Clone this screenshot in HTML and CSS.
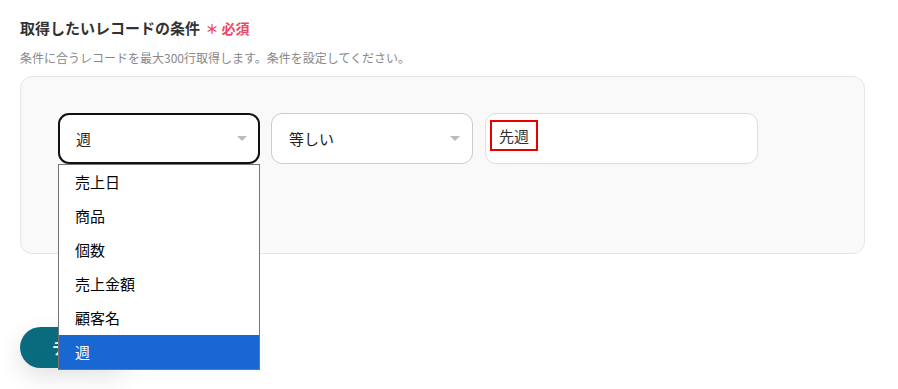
FILE: index.html
```html
<!DOCTYPE html>
<html lang="ja">
<head>
    <meta charset="UTF-8">
    <meta name="viewport" content="width=device-width, initial-scale=1.0">
    <title>取得したいレコードの条件</title>
    <link rel="stylesheet" href="styles.css">
</head>
<body>
    <div class="field">
        <div class="field-label">
            取得したいレコードの条件
            <span class="required"><span class="star">＊</span>必須</span>
        </div>
        <p class="field-help">条件に合うレコードを最大300行取得します。条件を設定してください。</p>

        <div class="condition-panel">
            <div class="condition-row">
                <div class="select-wrap">
                    <div class="select select-open">
                        <span>週</span>
                        <span class="caret"></span>
                    </div>
                    <ul class="options">
                        <li>売上日</li>
                        <li>商品</li>
                        <li>個数</li>
                        <li>売上金額</li>
                        <li>顧客名</li>
                        <li class="selected">週</li>
                    </ul>
                </div>
                <div class="select">
                    <span>等しい</span>
                    <span class="caret"></span>
                </div>
                <div class="text-input">
                    <span class="highlight">先週</span>
                </div>
            </div>
        </div>

        <button type="button" class="btn-test">テスト</button>
    </div>
</body>
</html>
```

FILE: styles.css
```css
body {
    margin: 0;
    min-height: 389px;
    background: #fff;
    font-family: 'Noto Sans CJK JP', 'Noto Sans', sans-serif;
    color: #333;
}

.field {
    padding: 14px 20px 21px 20px;
    width: 845px;
}

.field-label {
    font-size: 15px;
    font-weight: 700;
    line-height: 28px;
    color: #333;
}

.required {
    color: #ec4a62;
    font-size: 14px;
    font-weight: 700;
    margin-left: 2px;
}

.star {
    font-size: 13px;
    margin-right: 3px;
}

.field-help {
    margin: 6px 0 9px 0;
    font-size: 12px;
    line-height: 18px;
    color: #888;
}

.condition-panel {
    background: #f9f9f9;
    border: 1px solid #e6e6e6;
    border-radius: 12px;
    height: 178px;
    padding: 36px 0 0 37px;
    box-sizing: border-box;
}

.condition-row {
    display: flex;
    gap: 11px;
}

.select-wrap {
    position: relative;
}

.select {
    width: 202px;
    height: 51px;
    box-sizing: border-box;
    background: #fff;
    border: 1px solid #ccc;
    border-radius: 11px;
    display: flex;
    align-items: center;
    justify-content: space-between;
    padding: 0 12px 0 17px;
    font-size: 15px;
    color: #222;
}

.select-open {
    border: 2px solid #111;
    padding-left: 16px;
    padding-right: 11px;
}

.caret {
    width: 0;
    height: 0;
    border-left: 5px solid transparent;
    border-right: 5px solid transparent;
    border-top: 5px solid #bbb;
}

.text-input {
    width: 273px;
    height: 51px;
    box-sizing: border-box;
    margin-left: 1px;
    background: #fff;
    border: 1px solid #ddd;
    border-radius: 11px;
    padding: 6px 0 0 4px;
    font-size: 15px;
    color: #333;
}

.highlight {
    display: inline-block;
    border: 2px solid #e60000;
    padding: 4px 7px;
    line-height: 19px;
}

.options {
    position: absolute;
    top: 51px;
    left: 0;
    width: 202px;
    box-sizing: border-box;
    margin: 0;
    padding: 0;
    list-style: none;
    background: #fff;
    border: 1px solid #767676;
    z-index: 2;
}

.options li {
    height: 34px;
    line-height: 34px;
    padding-left: 16px;
    font-size: 15px;
    color: #000;
}

.options li.selected {
    background: #1967d2;
    color: #fff;
}

.btn-test {
    margin-top: 73px;
    height: 41px;
    padding: 0 32px;
    border: none;
    border-radius: 21px;
    background: #0b6b7e;
    color: #fff;
    font-family: inherit;
    font-size: 15px;
    font-weight: 700;
    box-shadow: 0 8px 24px rgba(0, 0, 0, 0.12);
}
```
